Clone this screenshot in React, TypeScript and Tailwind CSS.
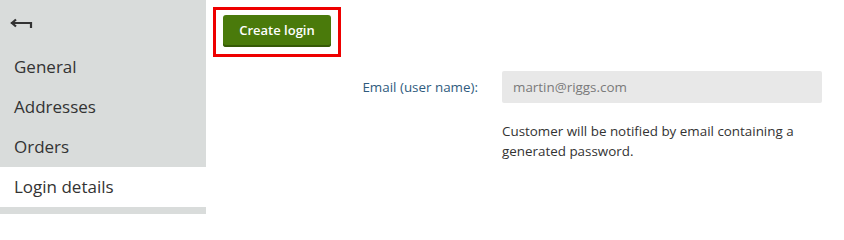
import React from 'react';

const navItems = ['General', 'Addresses', 'Orders', 'Login details'];

const BackArrow: React.FC = () => (
  <svg width="24" height="14" viewBox="0 0 24 14" fill="none" stroke="#333" strokeWidth="2.2" strokeLinecap="square">
    <path d="M2 5h19v4" />
    <path d="M6 1.5L2 5l4 3.5" strokeLinejoin="miter" strokeLinecap="butt" />
  </svg>
);

const App: React.FC = () => {
  const active = 'Login details';

  return (
    <div className="flex h-[214px] w-[844px] overflow-hidden bg-white font-['Open_Sans','Noto_Sans',sans-serif]">
      <aside className="w-[206px] shrink-0 bg-[#d9dcdb]">
        <div className="flex h-[47px] items-center pl-[10px] pt-[2px]">
          <BackArrow />
        </div>
        <nav className="flex flex-col">
          {navItems.map((item) => (
            <div
              key={item}
              className={`flex h-[40px] items-center pl-[14px] text-[17px] text-[#333] ${item === active ? 'bg-white' : ''}`}
            >
              {item}
            </div>
          ))}
        </nav>
      </aside>

      <main className="flex-1">
        <div className="pl-[7px] pt-[7px]">
          <div className="inline-block border-[3px] border-[#ee0000] px-[7px] pt-[5px] pb-[7px]">
            <button
              type="button"
              className="h-[32px] w-[108px] rounded-[3px] bg-[#4a7a0b] text-[13px] font-semibold text-white shadow-[inset_0_-2px_0_#365a07]"
            >
              Create login
            </button>
          </div>
        </div>

        <div className="mt-[14px] flex gap-[24px]">
          <label className="flex h-[32px] w-[272px] items-center justify-end text-[13.4px] text-[#2f5b7e]">
            Email (user name):
          </label>
          <div className="w-[320px]">
            <div className="flex h-[32px] items-center rounded-[2px] bg-[#e8e8e8] px-[11px] text-[13.4px] text-[#7a7a7a]">
              martin@riggs.com
            </div>
            <p className="mt-[18px] text-[13.4px] leading-[20px] text-[#333]">
              Customer will be notified by email containing a generated password.
            </p>
          </div>
        </div>
      </main>
    </div>
  );
};

export default App;
